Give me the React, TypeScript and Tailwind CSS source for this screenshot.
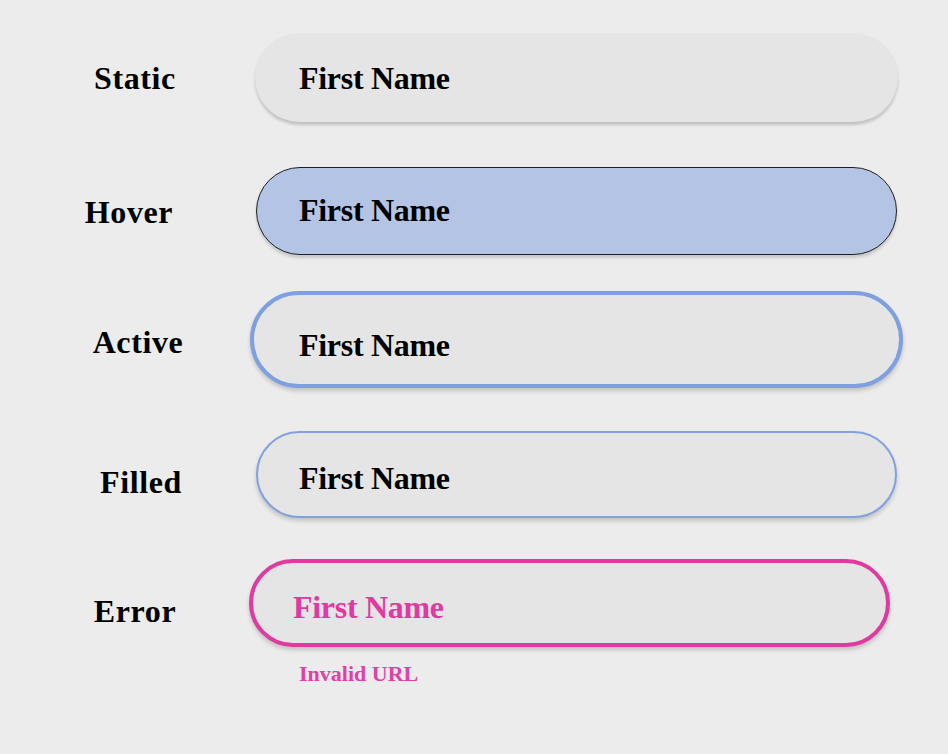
const serif = "font-['Liberation_Serif',serif]";

export default function App() {
  return (
    <div className={`min-h-[754px] w-[948px] bg-[#ebeceb] pt-[33px] ${serif}`}>
      {/* Static */}
      <div className="flex items-start">
        <div className="ml-[30px] w-[210px] pt-[29px] text-center text-[32px] leading-none font-bold tracking-[0.6px] text-black">
          Static
        </div>
        <div className="ml-[15px] flex h-[89px] w-[643px] items-center rounded-full bg-[#e5e5e5] pl-[44px] shadow-[0_3px_3px_rgba(0,0,0,0.18)]">
          <span className="text-[32px] leading-none font-bold tracking-[-0.3px] text-black">First Name</span>
        </div>
      </div>

      {/* Hover */}
      <div className="mt-[45px] flex items-start">
        <div className="ml-[30px] w-[210px] pt-[29px] pr-[12px] text-center text-[32px] leading-none font-bold tracking-[0.6px] text-black">
          Hover
        </div>
        <div className="ml-[16px] flex h-[88px] w-[641px] items-center rounded-full border border-[#1f1f1f] bg-[#b4c4e5] pb-[2px] pl-[42px] shadow-[0_3px_3px_rgba(0,0,0,0.15)]">
          <span className="text-[32px] leading-none font-bold tracking-[-0.3px] text-black">First Name</span>
        </div>
      </div>

      {/* Active */}
      <div className="mt-[36px] flex items-start">
        <div className="ml-[30px] w-[210px] pt-[35px] pl-[6px] text-center text-[32px] leading-none font-bold tracking-[0.6px] text-black">
          Active
        </div>
        <div className="ml-[10px] flex h-[97px] w-[653px] items-center rounded-full border-4 border-[#7e9fe0] bg-[#e5e5e5] pt-[10px] pl-[45px] shadow-[0_3px_4px_rgba(0,0,0,0.18)]">
          <span className="text-[32px] leading-none font-bold tracking-[-0.3px] text-black">First Name</span>
        </div>
      </div>

      {/* Filled */}
      <div className="mt-[43px] flex items-start">
        <div className="ml-[30px] w-[210px] pt-[35px] pl-[12px] text-center text-[32px] leading-none font-bold tracking-[0.6px] text-black">
          Filled
        </div>
        <div className="ml-[16px] flex h-[87px] w-[641px] items-center rounded-full border-2 border-[#82a1e0] bg-[#e5e5e5] pt-[7px] pl-[41px] shadow-[0_3px_4px_rgba(0,0,0,0.18)]">
          <span className="text-[32px] leading-none font-bold tracking-[-0.3px] text-black">First Name</span>
        </div>
      </div>

      {/* Error */}
      <div className="mt-[41px] flex items-start">
        <div className="ml-[30px] w-[210px] pt-[36px] text-center text-[32px] leading-none font-bold tracking-[0.6px] text-black">
          Error
        </div>
        <div className="ml-[9px] flex flex-col">
          <div className="flex h-[88px] w-[641px] items-center rounded-full border-4 border-[#e03aa0] bg-[#e5e5e5] pt-[8px] pl-[40px] shadow-[0_3px_4px_rgba(0,0,0,0.18)]">
            <span className="text-[32px] leading-none font-bold tracking-[-0.3px] text-[#e03aa0]">First Name</span>
          </div>
          <div className="mt-[16px] pl-[50px] text-[22px] leading-none font-bold text-[#e041a5]">
            Invalid URL
          </div>
        </div>
      </div>
    </div>
  );
}
